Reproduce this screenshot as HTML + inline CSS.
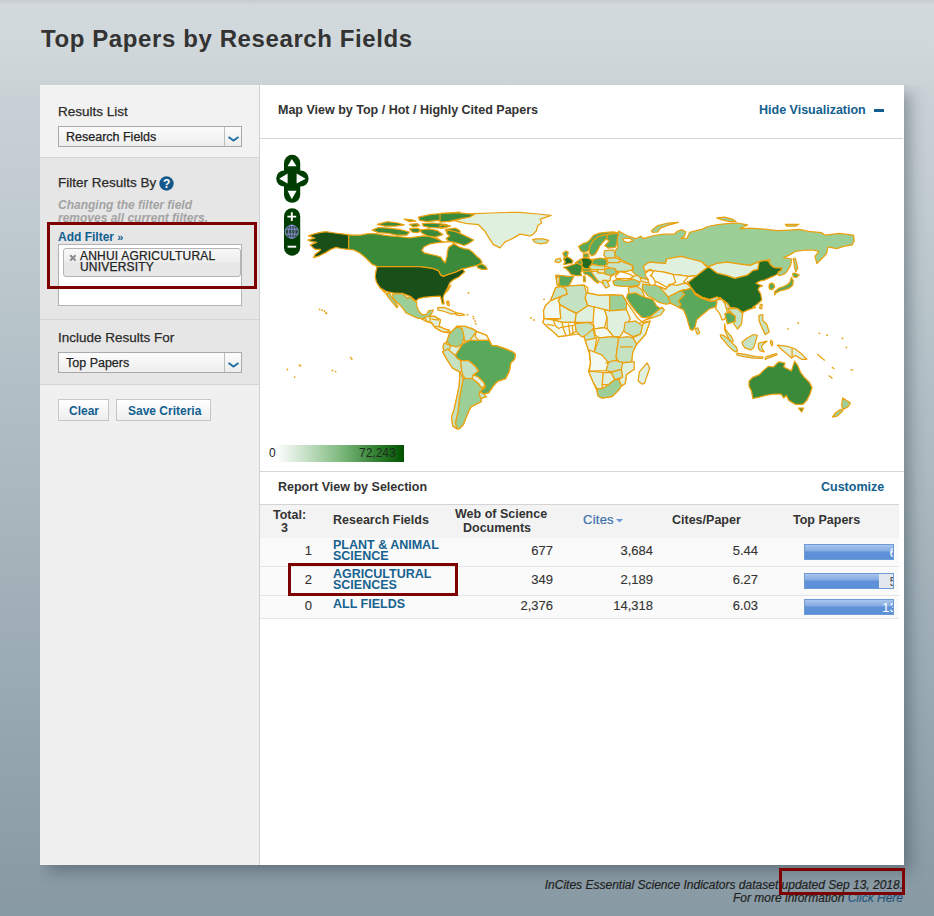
<!DOCTYPE html>
<html><head><meta charset="utf-8">
<style>
*{margin:0;padding:0;box-sizing:border-box}
html,body{width:934px;height:916px;overflow:hidden}
body{font-family:"Liberation Sans",sans-serif;color:#333;position:relative;
background:linear-gradient(to bottom,#c6ccd0 0px,#d2d9dc 5px,#d1d8db 45px,#c9d1d6 100px,#bec9ce 240px,#b7c4ca 320px,#a1b0b8 600px,#8a9ba5 880px,#889aa4 916px);}
.a{position:absolute;white-space:nowrap}
.b{font-weight:bold}
.lnk{color:#12608f !important}
.t13{font-size:13.5px;line-height:16px;color:#2a2a2a;-webkit-text-stroke:0.25px #2a2a2a}
.rg{-webkit-text-stroke:0.25px currentColor}
.t125b{font-size:12.5px;line-height:15px;font-weight:bold;color:#333}
.sel{position:absolute;width:184px;height:21px;border:1px solid #a9a9a9;background:linear-gradient(#fcfcfc,#ededed)}
.sel .arr{position:absolute;right:0;top:0;width:17px;height:19px;border-left:1px solid #bdbdbd}
.btn{position:absolute;top:399px;height:22px;border:1px solid #c6c6c6;background:linear-gradient(#ffffff,#eeeeee)}
.num{position:absolute;-webkit-text-stroke:0.12px #333;font-size:13px;line-height:15px;color:#333;text-align:right;white-space:nowrap}
.fld{position:absolute;left:333px;font-size:12.5px;font-weight:bold;color:#17628f;line-height:11px;white-space:nowrap}
.bar{position:absolute;left:804px;width:90px;height:16px;background:linear-gradient(#a9c5ec 0%,#86ade3 40%,#5f91d8 52%,#5b8fd7 100%);border:1px solid #6d9bd8;overflow:hidden}
.bar span{position:absolute;right:-4px;top:0;color:#fff;font-size:13.5px;line-height:15px}
.rb{position:absolute;border:3px solid #7d0101}
</style></head>
<body>
<div class="a b" style="left:41px;top:25px;font-size:24px;line-height:28px;color:#333;letter-spacing:0.6px">Top Papers by Research Fields</div>
<div class="a" style="left:40px;top:85px;width:864px;height:780px;background:#fff;box-shadow:7px 7px 14px -1px rgba(35,50,60,.38);clip-path:inset(0 -40px -40px 0)"></div>
<div class="a" style="left:40px;top:85px;width:219px;height:780px;background:#f0f0f0"></div>
<div class="a" style="left:259px;top:85px;width:1px;height:780px;background:#d0d0d0"></div>
<div class="a" style="left:40px;top:85px;width:219px;height:72px;background:#f2f2f2"></div>
<div class="a" style="left:40px;top:157px;width:219px;height:1px;background:#d6d6d6"></div>
<div class="a" style="left:40px;top:158px;width:219px;height:161px;background:#e6e6e6"></div>
<div class="a" style="left:40px;top:319px;width:219px;height:1px;background:#d3d3d3"></div>
<div class="a" style="left:40px;top:320px;width:219px;height:64px;background:#e6e6e6"></div>
<div class="a" style="left:40px;top:384px;width:219px;height:1px;background:#d3d3d3"></div>

<div class="a t13" style="left:58px;top:103.5px">Results List</div>
<div class="sel" style="left:58px;top:126px"><div class="arr"><svg width="17" height="19" viewBox="0 0 17 19"><path d="M3.5 10 L8.5 13.5 L13.5 10" fill="none" stroke="#2170a6" stroke-width="2"/></svg></div></div>
<div class="a rg" style="left:66px;top:130px;font-size:12.5px;line-height:15px;color:#222">Research Fields</div>

<div class="a t13" style="left:58px;top:174.5px">Filter Results By</div>
<svg class="a" style="left:159px;top:176px" width="15" height="15" viewBox="0 0 15 15"><circle cx="7.5" cy="7.5" r="7.2" fill="#15598a"/><text x="7.6" y="12" font-family="Liberation Sans" font-weight="bold" font-size="12" fill="#fff" text-anchor="middle">?</text></svg>
<div class="a" style="left:58px;top:198.5px;font-size:12px;font-style:italic;font-weight:bold;color:#a3a3a3;line-height:13px">Changing the filter field<br>removes all current filters.</div>
<div class="a lnk b" style="left:58px;top:230px;font-size:12px;line-height:14px">Add Filter <span style="font-size:11px">»</span></div>
<div class="a" style="left:58px;top:244px;width:184px;height:62px;background:#fff;border:1px solid #b2b2b2"></div>
<div class="a" style="left:63px;top:248px;width:178px;height:29px;border:1px solid #b5b5b5;border-radius:3px;background:linear-gradient(#f8f8f8,#efefef 45%,#e6e6e6 55%,#e8e8e8)"></div>
<svg class="a" style="left:69px;top:253.5px" width="8" height="8" viewBox="0 0 8 8"><path d="M1.2 1.2 L6.6 6.6 M6.6 1.2 L1.2 6.6" stroke="#8a8a8a" stroke-width="2"/></svg>
<div class="a rg" style="left:80px;top:251px;font-size:12px;line-height:10.8px;color:#222;letter-spacing:0.2px">ANHUI AGRICULTURAL<br>UNIVERSITY</div>
<div class="rb" style="left:47px;top:222px;width:210px;height:67px"></div>

<div class="a t13" style="left:58px;top:330px">Include Results For</div>
<div class="sel" style="left:58px;top:352px"><div class="arr"><svg width="17" height="19" viewBox="0 0 17 19"><path d="M3.5 10 L8.5 13.5 L13.5 10" fill="none" stroke="#2170a6" stroke-width="2"/></svg></div></div>
<div class="a rg" style="left:66px;top:355.5px;font-size:12.5px;line-height:15px;color:#222">Top Papers</div>
<div class="btn" style="left:58px;width:51px"></div>
<div class="btn" style="left:116px;width:95px"></div>
<div class="a lnk b" style="left:69px;top:404px;font-size:12px;line-height:14px">Clear</div>
<div class="a lnk b" style="left:128px;top:404px;font-size:12px;line-height:14px">Save Criteria</div>

<div class="a t125b" style="left:278px;top:103px">Map View by Top / Hot / Highly Cited Papers</div>
<div class="a t125b lnk" style="left:759px;top:103px">Hide Visualization</div>
<div class="a" style="left:874px;top:109px;width:10px;height:3px;background:#12608f"></div>
<div class="a" style="left:260px;top:138px;width:643px;height:1px;background:#d6d6d6"></div>
<svg class="a" style="left:0;top:0" width="934" height="916" viewBox="0 0 934 916">
<g stroke="#eba10e" stroke-width="1.25" stroke-linejoin="round">
<polygon fill="#e0f0de" points="446.8,341.7 449.4,334.0 457.1,326.3 464.8,326.3 472.5,328.9 476.4,331.4 486.6,335.3 491.8,345.6 496.5,345.8 504.2,348.4 512.0,351.6 515.2,354.1 514.5,359.3 510.7,363.1 509.4,370.9 505.5,378.6 497.8,381.1 494.0,385.0 488.8,392.7 483.7,394.0 486.3,396.6 481.1,398.5 481.1,401.7 476.0,404.3 470.8,406.9 468.3,412.0 465.7,418.4 463.1,424.9 459.3,428.7 456.7,428.7 452.8,426.1 451.6,417.1 454.1,409.4 456.7,397.9 459.3,385.0 459.9,372.1 452.8,368.3 447.7,360.6 443.9,354.1 442.6,351.6 444.2,352.0 443.0,346.9"/>
<polygon fill="#e0f0de" points="422.4,317.3 425.0,316.6 434.0,316.0 440.4,319.9 439.1,326.3 444.2,328.9 449.4,330.4 450.7,332.7 446.8,332.7 441.7,331.4 435.2,327.6 431.4,323.1 426.3,321.4 421.1,318.6"/>
<polygon fill="#f2f9f1" points="555.7,287.7 562.1,286.4 584.0,285.1 587.8,287.7 587.8,292.9 599.4,295.4 609.7,294.8 622.5,295.4 626.4,301.9 632.8,310.9 637.9,318.6 643.1,322.4 650.0,321.1 645.6,334.0 636.6,344.3 632.8,352.0 631.5,362.3 631.7,362.2 634.2,369.3 626.5,374.4 625.2,383.4 621.4,386.0 618.8,389.9 612.4,396.3 602.1,398.2 598.3,396.3 597.0,391.1 593.1,382.1 588.6,371.2 590.6,362.9 589.3,350.0 590.4,362.3 589.1,352.0 586.5,344.3 585.2,337.9 578.8,334.0 568.5,335.3 558.3,336.6 553.1,331.4 548.0,327.6 542.8,322.4 544.1,318.6 543.5,310.9 545.4,305.7 550.6,300.6"/>
<polygon fill="#e0f0de" points="632.0,276.0 646.0,275.0 650.0,284.0 644.0,290.0 636.0,290.0 630.0,283.0"/>
<polygon fill="#e0f0de" points="455.4,220.9 462.0,215.0 474.3,213.6 490.0,213.0 505.0,212.5 520.0,212.3 537.7,214.0 551.2,215.3 540.3,219.1 541.6,223.0 537.7,225.6 536.4,230.7 532.6,234.6 530.0,235.9 520.0,234.1 512.8,238.4 505.1,241.9 500.0,247.9 493.1,244.4 488.8,237.6 484.5,230.7 478.5,224.7 465.7,223.4"/>
<polygon fill="#c5e3c2" points="532.6,239.7 536.4,238.8 542.8,238.8 548.6,240.4 546.7,242.9 540.3,243.8 535.1,242.5"/>
<polygon fill="#3a8a3a" points="377.3,224.3 387.5,221.7 397.8,223.0 404.2,224.9 395.2,226.2 385.0,226.2"/>
<polygon fill="#3a8a3a" points="372.1,230.1 378.5,227.5 388.8,228.1 399.1,229.4 409.4,232.0 406.8,235.2 396.5,235.2 388.8,233.3 378.5,232.6"/>
<polygon fill="#3a8a3a" points="404.2,219.1 412.0,219.8 415.8,221.1 409.4,221.7"/>
<polygon fill="#3a8a3a" points="409.4,224.3 417.1,223.6 419.7,225.6 413.2,226.9"/>
<polygon fill="#3a8a3a" points="409.4,228.8 417.1,228.1 422.2,230.7 417.1,232.6 412.0,232.0"/>
<polygon fill="#3a8a3a" points="418.4,217.2 429.9,214.6 442.8,213.4 460.0,212.1 460.0,219.1 449.2,221.7 437.6,220.4 427.4,221.7 419.7,220.4"/>
<polygon fill="#3a8a3a" points="422.2,223.6 432.5,223.0 445.4,224.3 450.5,226.2 442.8,228.1 429.9,227.5 423.5,226.2"/>
<polygon fill="#3a8a3a" points="419.7,230.1 428.7,228.8 437.6,230.7 442.8,234.6 435.1,237.1 427.4,235.9 422.2,233.3"/>
<polygon fill="#3a8a3a" points="429.9,237.1 437.6,238.4 442.8,242.3 435.1,243.6"/>
<polygon fill="#3a8a3a" points="445.4,229.4 455.6,228.1 460.0,230.7 460.0,237.1 453.1,238.4 447.9,234.6"/>
<polygon fill="#3a8a3a" points="440.0,213.6 457.1,212.7 474.3,214.4 470.0,217.0 461.4,218.7 448.6,221.3 440.0,222.1"/>
<polygon fill="#3a8a3a" points="440.0,225.6 445.1,224.7 445.1,227.3 440.0,228.1"/>
<polygon fill="#3a8a3a" points="447.3,230.1 455.0,231.4 462.7,234.6 469.1,237.8 473.6,240.0 468.5,243.6 464.0,245.5 458.8,243.6 453.7,242.3 448.5,241.0 446.0,238.4 449.8,235.9 446.6,233.3"/>
<polygon fill="#1b4f19" points="348.6,234.8 342.4,233.9 334.7,233.0 325.7,231.7 319.3,232.6 314.1,233.9 308.4,235.9 312.2,237.1 314.8,238.2 307.7,240.0 311.6,241.6 316.7,242.3 310.3,244.9 312.8,247.4 315.4,249.4 320.6,249.4 319.3,251.3 315.4,253.9 313.5,257.7 319.3,255.8 325.7,252.6 330.8,249.4 336.0,247.4 341.1,248.5 348.6,249.4"/>
<polygon fill="#3a8a3a" points="348.6,234.8 354.0,235.2 360.4,235.2 366.8,233.9 372.0,233.5 377.1,233.9 383.5,235.2 389.9,235.9 397.6,236.5 402.8,237.1 410.0,237.8 416.4,236.9 422.8,235.9 429.3,236.5 433.8,237.8 439.6,240.0 443.4,242.3 448.5,241.6 453.7,243.6 458.8,246.8 464.0,248.7 469.1,249.4 473.0,252.6 476.8,256.4 480.0,259.0 482.0,262.2 480.0,264.1 476.8,265.4 471.7,266.7 466.5,268.0 462.7,268.6 458.8,270.6 455.0,272.5 448.5,274.4 443.4,276.4 440.8,275.1 438.3,270.6 433.1,268.6 425.4,267.4 417.7,266.5 410.0,266.5 377.1,266.5 372.0,264.1 368.1,260.3 364.2,256.4 359.1,252.6 354.0,250.0 348.6,249.4"/>
<polygon fill="#ffffff" points="421.6,250.3 424.1,246.8 429.3,244.2 435.7,242.9 442.1,242.3 448.5,241.6 454.3,242.3 452.4,244.9 448.5,247.4 447.3,252.6 447.0,256.4 445.3,262.9 442.8,260.3 440.8,257.1 435.7,255.5 429.3,254.2 424.1,252.8"/>
<polygon fill="#3a8a3a" points="476.8,265.4 482.0,263.9 485.8,266.5 487.1,269.3 482.0,269.3 478.1,268.0"/>
<polygon fill="#1b4f19" points="377.1,266.5 410.0,266.5 417.7,266.5 425.4,267.4 433.1,268.6 438.3,270.6 440.8,275.1 443.4,276.4 448.5,274.4 455.0,272.5 458.8,270.6 462.7,268.6 464.6,271.9 458.8,277.0 453.7,279.6 449.8,282.8 447.9,287.3 444.0,295.0 450.7,285.1 448.1,290.3 444.2,294.1 443.0,298.0 444.2,303.8 442.3,303.8 440.4,296.1 431.4,296.7 423.7,297.4 418.5,298.6 416.0,301.2 410.8,296.7 403.1,293.5 392.8,292.9 386.4,291.6 380.0,287.7 387.4,295.0 383.5,291.1 379.7,287.3 376.4,282.1 375.2,277.0 375.8,271.9"/>
<polygon fill="#9ccf98" points="392.8,294.0 402.5,293.3 407.6,298.5 409.5,296.6 413.4,300.4 416.6,302.3 416.9,306.2 418.5,310.7 421.8,314.5 426.3,314.5 428.8,310.7 433.3,310.0 431.4,313.9 428.8,317.1 425.0,318.4 418.5,318.4 412.1,315.8 405.7,312.6 403.8,309.4 399.3,304.3 395.4,301.1 392.8,297.2"/>
<polygon fill="#9ccf98" points="387.1,293.3 389.6,293.3 392.2,297.8 395.4,301.7 398.0,306.8 396.7,307.5 393.5,303.6 390.3,299.8 387.1,295.3"/>
<polygon fill="#e0f0de" points="425.0,317.0 434.0,316.3 440.4,319.9 439.1,326.3 444.2,328.9 449.4,330.4 446.8,332.1 441.7,331.4 435.2,327.6 431.4,322.4 426.3,321.1"/>
<polygon fill="#e0f0de" points="437.8,307.6 444.2,307.4 452.0,310.6 457.1,313.2 452.0,314.1 444.2,311.5 437.8,309.8"/>
<polygon fill="#e0f0de" points="455.8,312.8 462.2,313.7 464.8,315.0 459.7,315.7 455.8,314.7"/>
<polygon fill="#e0f0de" points="446.8,301.9 448.7,301.2 449.4,305.7 447.5,305.1"/>
<polygon fill="#9ccf98" points="449.4,334.0 457.1,326.3 462.2,328.9 464.8,334.0 462.2,344.3 457.1,346.9 450.7,345.6 446.8,341.7"/>
<polygon fill="#c5e3c2" points="457.1,326.3 464.8,326.3 472.5,328.9 476.4,331.4 469.9,340.4 464.8,341.7 463.5,334.0 462.2,328.9"/>
<polygon fill="#f2f9f1" points="476.4,331.4 486.6,335.3 489.2,340.4 478.9,340.4 475.1,336.6"/>
<polygon fill="#c5e3c2" points="444.2,343.0 450.7,345.6 449.4,349.4 444.2,352.0 443.0,346.9"/>
<polygon fill="#5aa85a" points="462.2,344.3 469.9,340.4 478.9,340.4 489.2,340.4 491.8,345.6 496.5,345.8 504.2,348.4 512.0,351.6 515.2,354.1 514.5,359.3 510.7,363.1 509.4,370.9 505.5,378.6 497.8,381.1 494.0,385.0 488.8,392.7 483.7,394.0 479.8,391.4 485.0,387.6 483.7,382.4 478.5,377.3 473.4,374.7 478.5,370.9 474.7,365.7 468.3,360.6 460.6,360.6 456.7,358.0 455.4,355.4"/>
<polygon fill="#c5e3c2" points="442.6,351.6 447.7,349.0 455.4,355.4 456.7,358.0 460.6,360.6 461.8,370.9 460.6,372.1 452.8,368.3 447.7,360.6 443.9,354.1"/>
<polygon fill="#c5e3c2" points="460.6,360.6 468.3,360.6 474.7,365.7 478.5,370.9 473.4,374.7 472.1,378.6 465.7,378.6 463.1,376.0 461.8,370.9"/>
<polygon fill="#e0f0de" points="472.1,378.6 473.4,374.7 478.5,377.3 483.7,382.4 485.0,386.3 481.1,387.6 478.5,383.7"/>
<polygon fill="#c5e3c2" points="479.8,391.4 483.7,394.0 486.3,396.6 481.1,398.5 479.2,395.3"/>
<polygon fill="#9ccf98" points="463.1,378.6 472.1,378.6 478.5,383.7 481.1,387.6 485.0,387.6 479.8,391.4 479.2,395.3 481.1,398.5 481.1,401.7 476.0,404.3 470.8,406.9 468.3,412.0 465.7,418.4 463.1,424.9 459.3,428.7 456.7,428.7 455.4,422.3 458.0,412.0 459.3,399.1 461.2,388.9"/>
<polygon fill="#c5e3c2" points="459.9,372.1 463.1,378.6 461.2,388.9 459.3,399.1 458.0,412.0 455.4,422.3 456.7,428.7 452.8,426.1 451.6,417.1 454.1,409.4 456.7,397.9 459.3,385.0"/>
<polygon fill="#c5e3c2" points="555.7,287.7 562.1,286.4 566.0,289.0 567.3,294.1 560.8,296.7 550.6,300.6"/>
<polygon fill="#c5e3c2" points="562.1,286.4 568.5,285.8 584.0,285.1 586.5,292.9 585.2,298.0 587.8,305.7 576.3,313.4 568.5,309.6 559.6,304.4 558.3,300.6 560.8,296.7 567.3,294.1 566.0,289.0"/>
<polygon fill="#e0f0de" points="586.5,292.9 599.4,295.4 609.7,294.8 609.7,310.9 604.5,309.6 594.2,307.0 587.8,305.7 585.2,298.0"/>
<polygon fill="#9ccf98" points="609.7,294.8 622.5,295.4 626.4,301.9 626.4,309.6 609.7,310.9"/>
<polygon fill="#f2f9f1" points="550.6,300.6 560.8,296.7 558.3,300.6 559.6,304.4 560.8,318.6 553.1,318.6 544.1,318.6 543.5,310.9 545.4,305.7"/>
<polygon fill="#e0f0de" points="559.6,304.4 568.5,309.6 576.3,313.4 575.0,322.4 568.5,322.4 562.1,322.4 553.1,319.9 560.8,318.6"/>
<polygon fill="#e0f0de" points="576.3,313.4 587.8,305.7 594.2,307.0 594.2,322.4 589.1,322.4 581.4,322.4 575.0,322.4"/>
<polygon fill="#f2f9f1" points="594.2,307.0 604.5,309.6 607.1,317.3 604.5,327.6 594.2,328.9 593.0,322.4"/>
<polygon fill="#e0f0de" points="609.7,310.9 626.4,309.6 630.2,318.6 625.1,328.9 619.9,336.6 613.5,336.6 607.1,328.9 607.1,317.3 604.5,309.6"/>
<polygon fill="#c5e3c2" points="625.1,322.4 635.4,321.1 643.1,326.3 640.5,334.0 632.8,336.6 623.8,331.4"/>
<polygon fill="#e0f0de" points="643.1,323.7 650.0,321.1 645.6,334.0 636.6,344.3 632.8,337.9 640.5,334.0"/>
<polygon fill="#f2f9f1" points="544.1,318.6 553.1,319.9 562.1,322.4 568.5,322.4 575.0,322.4 576.3,331.4 568.5,335.3 558.3,336.6 553.1,331.4 548.0,327.6 542.8,322.4"/>
<polygon fill="#c5e3c2" points="575.0,323.7 589.1,322.4 594.2,326.3 590.4,335.3 581.4,336.6 576.3,331.4"/>
<polygon fill="#c5e3c2" points="584.0,336.6 593.0,328.9 595.5,339.1 586.5,344.3"/>
<polygon fill="#f2f9f1" points="594.2,328.9 604.5,327.6 607.1,328.9 613.5,336.6 599.4,337.9 595.5,335.3"/>
<polygon fill="#e0f0de" points="585.2,340.4 596.8,337.9 594.2,352.0 589.1,352.0"/>
<polygon fill="#c5e3c2" points="599.4,337.9 613.5,336.6 618.7,337.9 617.4,346.9 616.1,357.1 618.7,364.9 608.4,362.3 596.8,355.9 591.7,352.0 594.2,352.0"/>
<polygon fill="#c5e3c2" points="618.7,337.9 627.6,336.6 632.8,337.9 636.6,344.3 632.8,352.0 631.5,362.3 618.7,362.3 616.1,357.1 617.4,346.9"/>
<polygon fill="#f2f9f1" points="589.3,350.0 602.1,355.1 608.5,362.9 606.0,370.6 589.3,371.2 590.6,362.9"/>
<polygon fill="#e0f0de" points="588.6,371.2 603.4,372.5 602.1,388.6 597.0,388.6 593.1,382.1"/>
<polygon fill="#e0f0de" points="603.4,372.5 611.1,372.5 615.0,379.6 608.5,384.7 602.1,384.7"/>
<polygon fill="#c5e3c2" points="606.0,362.9 615.0,360.3 624.0,362.9 621.4,369.3 611.1,371.9 606.0,370.6 608.5,362.9"/>
<polygon fill="#c5e3c2" points="611.1,372.5 621.4,369.3 622.7,377.0 615.0,379.6"/>
<polygon fill="#e0f0de" points="622.7,362.9 634.2,361.6 634.2,369.3 626.5,374.4 625.2,383.4 621.4,386.0 618.8,379.6 622.7,377.0 621.4,369.3"/>
<polygon fill="#9ccf98" points="597.0,388.6 602.1,388.6 608.5,384.7 615.0,379.6 618.8,379.6 621.4,386.0 618.8,389.9 612.4,396.3 602.1,398.2 598.3,396.3 597.0,391.1"/>
<polygon fill="#e0f0de" points="638.1,380.9 639.4,371.9 647.1,362.9 649.7,368.0 644.5,383.4 642.0,384.1"/>
<polygon fill="#9ccf98" points="618.7,231.0 626.7,235.5 635.7,238.7 640.8,236.2 643.4,238.7 653.7,235.5 664.0,234.2 674.2,234.2 676.8,231.7 682.0,229.7 685.8,231.7 684.5,236.2 680.7,238.7 687.1,238.1 689.7,232.3 697.4,230.4 702.5,229.1 707.6,226.5 717.9,224.6 727.1,223.6 737.4,223.0 747.6,224.9 739.9,228.8 750.2,228.1 760.5,228.8 777.7,230.7 789.3,230.1 799.6,229.4 808.5,231.4 821.4,232.6 825.2,235.2 839.4,233.3 853.5,235.2 854.2,241.0 852.2,244.9 844.5,246.1 836.8,248.7 830.4,247.4 827.8,247.4 826.5,253.9 821.4,259.0 816.9,263.5 815.0,256.4 818.8,251.3 812.4,250.0 806.0,250.0 795.7,251.3 789.3,255.1 783.5,257.7 791.8,259.0 790.6,265.4 786.7,271.9 785.0,273.6 779.8,275.6 777.3,274.3 778.5,271.7 781.1,270.4 781.8,267.9 776.0,267.9 773.4,267.2 770.2,264.6 768.9,261.4 770.0,259.6 759.2,261.6 750.2,265.4 739.9,264.1 727.1,262.2 716.8,263.5 707.8,266.7 701.4,261.6 691.1,259.0 680.8,256.4 666.7,259.0 665.4,263.5 657.7,262.9 650.0,262.2 650.0,280.3 643.7,280.3 641.1,277.7 635.1,274.3 631.7,270.9 633.4,266.6 628.2,264.0 621.4,262.3 619.7,258.0 614.5,255.4 615.4,250.3 618.0,246.9 617.1,240.0"/>
<polygon fill="#9ccf98" points="651.3,230.7 657.7,225.6 668.0,223.0 678.3,222.4 669.3,224.9 660.3,228.1 657.7,232.0 652.6,232.3"/>
<polygon fill="#ffffff" points="622.8,238.7 629.3,238.1 633.1,240.6 628.0,242.6 624.1,241.3"/>
<polygon fill="#9ccf98" points="716.8,217.9 724.5,217.2 732.2,219.1 736.1,221.7 729.7,221.7 722.0,219.8"/>
<polygon fill="#9ccf98" points="785.4,224.3 798.9,224.3 795.7,226.2 786.7,226.2"/>
<polygon fill="#9ccf98" points="793.3,258.9 795.2,258.2 796.5,262.7 797.8,267.9 795.9,271.7 794.6,267.9 794.0,262.7"/>
<polygon fill="#e0f0de" points="575.6,262.7 580.7,259.3 592.7,259.3 606.4,258.4 620.1,259.3 632.1,265.3 632.9,269.6 616.7,273.0 610.7,276.4 609.8,280.7 603.0,283.3 599.5,280.7 595.3,276.4 592.7,273.0 589.3,269.6 582.4,269.6"/>
<polygon fill="#5aa85a" points="578.6,246.4 580.7,250.7 583.3,252.4 586.7,251.6 589.3,249.9 590.1,245.6 593.5,240.4 597.8,237.0 603.0,235.3 608.1,234.4 615.0,233.6 618.4,233.1 613.2,231.9 606.4,232.3 599.5,233.1 593.5,235.3 591.0,238.7 587.5,242.1 582.4,243.9"/>
<polygon fill="#5aa85a" points="590.1,245.6 593.5,240.4 597.8,237.0 603.0,235.3 608.1,234.4 606.4,238.7 603.0,242.1 599.5,246.4 597.8,249.9 595.3,254.1 591.8,255.9 589.3,253.3 589.3,249.9"/>
<polygon fill="#5aa85a" points="608.1,234.4 615.0,233.6 618.4,233.1 617.5,237.9 616.7,244.7 615.0,247.3 608.1,248.1 604.7,245.6 609.0,241.3 606.4,238.7"/>
<polygon fill="#5aa85a" points="583.3,254.1 587.5,253.3 589.3,256.7 585.8,257.6 583.3,256.7"/>
<polygon fill="#5aa85a" points="562.7,253.3 566.1,251.1 568.3,252.4 567.0,256.7 565.3,258.4 563.6,259.3 564.4,256.7"/>
<polygon fill="#236a22" points="565.3,258.4 567.0,256.7 570.4,258.4 573.0,261.0 572.1,263.1 567.0,264.0 563.6,264.4 565.3,261.9 563.6,259.3"/>
<polygon fill="#c5e3c2" points="555.9,259.3 560.1,258.4 561.4,261.0 558.4,262.7 555.0,261.9"/>
<polygon fill="#3a8a3a" points="563.6,267.4 568.7,266.1 573.8,264.4 578.1,262.7 582.4,265.3 582.4,269.6 580.7,273.0 581.6,275.6 576.4,275.6 571.3,274.7 568.7,271.3 566.1,268.7"/>
<polygon fill="#5aa85a" points="555.7,275.1 562.1,275.7 568.5,276.4 573.7,276.4 571.1,282.1 568.5,286.0 562.1,286.0 557.6,285.4 556.3,279.6"/>
<polygon fill="#c5e3c2" points="556.3,277.0 559.6,277.0 558.9,284.7 557.0,284.7"/>
<polygon fill="#5aa85a" points="583.3,271.3 589.3,269.6 592.7,272.1 595.3,276.4 599.5,280.7 597.8,283.3 594.4,280.7 591.0,277.3 587.5,274.7 584.1,273.9"/>
<polygon fill="#5aa85a" points="583.3,276.4 585.0,276.4 585.4,281.6 583.7,281.6"/>
<polygon fill="#5aa85a" points="575.6,262.7 580.7,259.3 582.4,261.9 582.4,265.3 578.1,263.6"/>
<polygon fill="#236a22" points="580.7,259.3 584.1,257.6 589.3,258.4 592.7,261.0 591.8,264.4 589.3,267.0 590.1,268.7 585.0,268.7 581.6,266.1 582.4,262.7"/>
<polygon fill="#5aa85a" points="592.7,261.0 593.5,259.3 600.4,258.0 606.4,259.3 607.2,264.4 604.7,266.1 597.8,265.3 591.8,264.4"/>
<polygon fill="#c5e3c2" points="589.3,267.0 591.8,264.4 597.8,265.3 604.7,266.1 604.7,269.6 597.8,269.6 591.0,269.6"/>
<polygon fill="#5aa85a" points="581.6,268.7 585.0,268.7 590.1,268.7 591.0,269.6 589.3,271.3 583.3,271.3"/>
<polygon fill="#e0f0de" points="597.8,269.6 604.7,269.6 604.7,273.0 597.8,273.0"/>
<polygon fill="#9ccf98" points="604.7,269.6 609.8,267.9 615.0,268.7 616.7,273.0 610.7,275.6 604.7,273.9"/>
<polygon fill="#e0f0de" points="591.0,271.3 597.8,271.3 597.8,273.0 604.7,273.0 604.7,273.9 610.7,275.6 610.7,276.4 609.8,280.7 603.0,283.3 597.8,280.7 594.4,276.4"/>
<polygon fill="#c5e3c2" points="602.5,280.3 606.8,280.3 609.4,286.3 606.0,288.0 603.4,284.6"/>
<polygon fill="#c5e3c2" points="604.7,250.7 613.2,249.9 615.0,253.3 615.0,257.6 606.4,258.4 603.8,255.0"/>
<polygon fill="#c5e3c2" points="606.4,258.4 615.0,257.6 620.1,259.3 619.2,262.7 608.1,262.7 607.2,259.3"/>
<polygon fill="#c5e3c2" points="607.2,264.4 608.1,262.7 619.2,262.7 620.1,261.0 632.1,265.3 632.9,269.6 626.9,271.3 616.7,271.3 615.0,268.7 609.8,267.9 604.7,266.1"/>
<polygon fill="#ffffff" points="615.4,276.0 619.7,271.7 624.8,272.6 630.0,274.3 633.4,276.9 630.0,278.6 621.4,278.6 616.3,278.6"/>
<polygon fill="#9ccf98" points="612.8,281.1 618.0,279.4 624.8,280.3 633.4,279.4 640.2,282.0 638.5,285.4 630.0,286.3 621.4,286.3 614.5,285.4"/>
<polygon fill="#e0f0de" points="640.2,277.7 647.1,279.4 650.0,280.3 647.1,282.9 641.1,281.1"/>
<polygon fill="#e0f0de" points="650.0,262.2 657.7,262.9 665.4,263.5 666.7,259.0 680.8,256.4 691.1,259.0 701.4,261.6 707.2,267.4 701.4,271.9 697.5,275.7 688.5,276.4 679.6,275.1 673.1,274.4 662.8,271.9 657.7,271.9 652.6,270.6 650.0,269.3 645.5,272.0 643.1,266.6 647.0,263.4"/>
<polygon fill="#f2f9f1" points="652.6,270.6 662.8,271.9 673.1,274.4 679.6,275.1 688.5,276.4 697.5,275.7 695.0,282.1 688.5,284.7 678.3,287.3 666.7,287.3 657.7,282.1 650.0,279.6"/>
<polygon fill="#e0f0de" points="708.5,266.7 716.8,263.5 727.1,262.2 739.9,264.1 750.2,265.4 759.2,261.6 757.9,269.3 752.8,270.6 747.6,275.1 734.8,278.3 727.1,275.7 716.8,273.1 711.7,269.3"/>
<polygon fill="#c5e3c2" points="628.2,288.0 636.8,286.3 641.9,289.7 644.5,296.6 638.5,300.0 630.0,300.0 629.1,293.1"/>
<polygon fill="#9ccf98" points="642.6,284.1 647.7,284.8 654.1,284.8 659.3,286.7 665.7,289.3 668.3,297.0 670.8,303.4 665.7,304.1 658.0,302.1 652.8,298.3 647.7,295.7 642.6,289.3"/>
<polygon fill="#e0f0de" points="659.3,286.7 665.7,289.3 669.6,284.1 676.0,285.4 686.3,282.9 691.4,288.0 687.5,289.3 681.1,290.6 670.8,295.7 668.3,297.0"/>
<polygon fill="#9ccf98" points="668.3,297.0 670.8,295.7 681.1,290.6 687.5,289.3 691.4,288.0 685.0,294.4 681.1,298.3 678.5,300.9 681.1,304.7 678.5,307.3 670.8,303.4"/>
<polygon fill="#5aa85a" points="627.6,294.1 635.4,292.9 643.1,296.7 646.4,297.6 652.8,299.6 656.7,306.0 660.6,308.6 655.4,312.4 650.3,316.3 645.1,317.6 641.8,317.3 636.6,312.1 631.5,305.7 626.4,298.0"/>
<polygon fill="#c5e3c2" points="655.4,312.4 661.8,307.3 664.4,309.9 660.6,315.0 652.8,317.6 645.1,320.1 640.0,322.7 650.0,317.3"/>
<polygon fill="#ffffff" points="645.1,273.6 648.9,270.4 653.4,271.1 652.1,274.3 650.2,275.6 653.4,278.1 655.3,282.0 654.7,285.2 650.2,285.2 648.3,282.0 648.3,279.4 645.7,276.2"/>
<polygon fill="#236a22" points="688.5,282.1 695.0,277.0 701.4,271.9 708.5,266.7 711.7,269.3 716.8,273.1 727.1,275.7 734.8,278.3 747.6,275.1 752.8,270.6 757.9,269.3 759.2,261.6 765.6,260.3 768.9,261.4 770.2,264.6 773.4,267.2 776.0,267.9 781.8,267.9 781.1,270.4 778.5,271.7 777.3,274.3 773.4,276.2 768.9,278.1 764.4,280.1 761.2,280.7 758.0,282.0 756.1,283.3 759.3,284.6 762.5,285.9 759.3,287.1 758.0,289.7 760.6,293.6 761.8,300.0 757.7,303.7 752.6,307.6 755.6,307.3 747.9,309.9 742.8,312.4 737.6,308.6 729.9,307.3 727.4,303.4 722.2,299.6 717.1,297.0 709.4,299.6 701.7,297.0 695.2,293.1 691.4,288.0 687.5,281.6"/>
<polygon fill="#5aa85a" points="681.1,290.6 687.5,289.3 691.4,288.0 695.2,294.4 700.4,297.6 709.4,300.9 714.5,300.9 717.1,299.6 719.7,297.6 722.2,299.6 718.4,303.4 714.5,307.3 709.4,308.6 706.8,311.1 700.4,316.3 696.5,320.1 695.2,326.6 692.7,330.4 690.1,329.1 686.3,316.3 683.7,309.9 681.1,308.6 678.5,307.3 681.1,304.7 678.5,300.9 681.1,298.3 685.0,294.4"/>
<polygon fill="#c5e3c2" points="691.4,288.0 695.2,293.1 701.7,297.0 709.4,299.6 717.1,297.0 722.2,299.6 719.7,297.6 717.1,299.6 714.5,300.9 709.4,300.9 700.4,297.6 695.2,294.4"/>
<polygon fill="#c5e3c2" points="722.2,299.6 727.4,303.4 729.9,307.3 737.6,308.6 729.9,311.1 727.4,312.4 724.8,313.7 724.8,303.4"/>
<polygon fill="#c5e3c2" points="695.2,328.5 697.8,327.9 699.7,333.0 697.2,334.3"/>
<polygon fill="#f2f9f1" points="717.1,299.6 722.2,299.6 724.8,303.4 727.4,312.4 724.8,318.9 722.2,320.1 719.7,313.7 715.8,308.6"/>
<polygon fill="#c5e3c2" points="727.4,308.6 737.6,308.6 742.8,313.7 741.5,324.0 737.6,329.1 733.8,324.0 735.1,316.3 729.9,311.1"/>
<polygon fill="#5aa85a" points="724.8,313.7 729.9,312.4 735.1,316.3 735.1,321.4 731.2,322.7 727.4,324.0 726.1,318.9"/>
<polygon fill="#c5e3c2" points="724.6,323.9 725.6,329.6 728.5,333.5 731.4,336.4 733.3,341.2 731.4,342.2 728.5,338.3 726.1,333.5 724.6,329.6"/>
<polygon fill="#c5e3c2" points="720.3,334.9 723.7,335.4 728.5,339.3 732.3,343.1 736.2,347.0 737.6,350.8 735.2,351.8 731.4,348.9 727.5,345.1 723.7,340.2 720.8,337.3"/>
<polygon fill="#c5e3c2" points="742.0,342.2 746.8,338.3 753.5,334.5 757.4,335.4 755.5,342.2 753.5,347.9 750.7,349.9 744.9,347.9 742.9,345.1"/>
<polygon fill="#c5e3c2" points="736.7,353.2 743.9,354.2 750.7,355.7 756.4,356.6 763.2,357.1 762.2,358.5 753.5,358.1 743.9,356.6 737.2,355.2"/>
<polygon fill="#c5e3c2" points="758.4,343.1 767.0,341.2 763.2,344.1 761.3,347.0 764.1,351.8 760.3,350.8 758.4,347.9"/>
<polygon fill="#c5e3c2" points="766.1,356.6 769.9,355.7 772.8,354.7 776.7,353.7 776.7,354.9 772.8,356.3 769.0,357.8 765.1,359.5"/>
<polygon fill="#c5e3c2" points="770.9,340.2 772.8,342.2 771.9,346.0 770.4,343.1"/>
<polygon fill="#5aa85a" points="769.6,283.9 772.1,283.0 774.0,284.6 774.7,287.1 772.1,289.7 769.6,289.1 768.9,286.5"/>
<polygon fill="#5aa85a" points="792.7,273.6 794.6,273.0 799.1,274.9 796.5,277.5 793.3,276.9"/>
<polygon fill="#5aa85a" points="791.4,277.5 793.3,280.7 792.7,285.2 788.8,288.4 785.0,289.7 779.8,291.0 776.0,292.9 774.7,294.9 774.7,291.6 778.5,288.4 783.7,286.5 787.5,284.6 790.1,282.0 790.7,279.4"/>
<polygon fill="#c5e3c2" points="760.3,304.4 762.2,304.4 761.6,308.9 759.6,308.2"/>
<polygon fill="#c5e3c2" points="759.0,315.3 762.8,314.6 762.8,320.4 766.7,324.3 769.3,332.0 765.4,334.6 761.6,326.9 759.0,320.4"/>
<polygon fill="#3a8a3a" points="749.0,381.1 752.8,377.3 759.3,374.7 763.1,370.9 768.3,366.4 773.4,367.0 778.5,361.9 785.0,363.1 783.7,367.0 791.4,370.9 794.6,361.2 797.8,365.7 800.4,372.1 804.2,377.3 809.4,382.4 812.0,387.6 810.0,394.0 806.8,400.4 803.0,404.3 795.2,404.3 788.8,400.4 786.3,395.3 783.7,397.9 781.1,394.0 773.4,394.0 765.7,395.3 759.3,397.2 752.8,398.5 751.6,391.4 749.0,386.3"/>
<polygon fill="#3a8a3a" points="798.5,408.1 803.6,408.1 801.7,412.0"/>
<polygon fill="#9ccf98" points="842.8,397.9 850.5,403.0 847.9,406.9 842.8,409.4 841.5,405.6"/>
<polygon fill="#9ccf98" points="840.2,409.4 842.8,410.7 837.6,415.9 832.5,417.1 835.1,413.3"/>
<polygon fill="#e0f0de" points="777.3,345.1 787.5,346.4 795.2,349.0 801.7,354.1 806.8,359.3 801.7,359.3 795.2,355.4 791.4,358.0 788.8,355.4 782.4,350.3"/>
<polyline fill="none" points="430.1,316.6 430.1,321.1"/>
<polyline fill="none" points="431.4,319.2 439.1,320.1"/>
<polyline fill="none" points="435.2,326.3 440.4,326.9"/>
<polyline fill="none" points="553.1,319.9 555.7,326.3 559.6,328.9"/>
<polyline fill="none" points="562.1,322.4 563.4,328.9 566.0,335.3"/>
<polyline fill="none" points="568.5,323.7 569.8,334.0"/>
<polyline fill="none" points="559.6,327.6 567.3,326.3 575.0,325.0"/>
<polyline fill="none" points="546.7,324.4 554.4,325.6"/>
<polyline fill="none" points="572.4,325.0 573.0,334.6"/>
<polyline fill="none" points="619.9,346.9 632.8,346.9"/>
<polyline fill="none" points="673.1,274.4 675.7,282.1 666.7,287.3"/>
<polyline fill="none" points="688.5,276.4 683.4,282.1 688.5,284.7"/>
<polyline fill="none" points="792.1,347.9 792.1,357.6"/>
<polyline fill="none" points="817.1,354.1 824.8,360.6"/>
<polyline fill="none" points="828.7,375.4 832.5,378.6"/>
<polyline fill="none" points="850.5,369.6 853.1,370.2"/>
<polyline fill="none" points="831.9,367.0 834.4,368.9"/>
<circle cx="473.2" cy="316.6" r="0.9" fill="#eba10e" stroke="none"/>
<circle cx="473.8" cy="318.6" r="0.9" fill="#eba10e" stroke="none"/>
<circle cx="475.1" cy="321.1" r="0.9" fill="#eba10e" stroke="none"/>
<circle cx="475.7" cy="323.7" r="0.9" fill="#eba10e" stroke="none"/>
<circle cx="467.4" cy="314.7" r="0.9" fill="#eba10e" stroke="none"/>
<circle cx="447" cy="301.5" r="0.9" fill="#eba10e" stroke="none"/>
<circle cx="448" cy="303" r="0.9" fill="#eba10e" stroke="none"/>
<circle cx="319.6" cy="309.3" r="0.9" fill="#eba10e" stroke="none"/>
<circle cx="322" cy="310.2" r="0.9" fill="#eba10e" stroke="none"/>
<circle cx="324.5" cy="311" r="0.9" fill="#eba10e" stroke="none"/>
<circle cx="325.9" cy="312.9" r="0.9" fill="#eba10e" stroke="none"/>
<circle cx="326.5" cy="313.3" r="0.9" fill="#eba10e" stroke="none"/>
<circle cx="350.7" cy="357.7" r="0.9" fill="#eba10e" stroke="none"/>
<circle cx="351.8" cy="359.1" r="0.9" fill="#eba10e" stroke="none"/>
<circle cx="299.4" cy="365.1" r="0.9" fill="#eba10e" stroke="none"/>
<circle cx="300.5" cy="365.9" r="0.9" fill="#eba10e" stroke="none"/>
<circle cx="287.4" cy="369.5" r="0.9" fill="#eba10e" stroke="none"/>
<circle cx="294.7" cy="377.1" r="0.9" fill="#eba10e" stroke="none"/>
<circle cx="332.4" cy="370.5" r="0.9" fill="#eba10e" stroke="none"/>
<circle cx="335.6" cy="371.6" r="0.9" fill="#eba10e" stroke="none"/>
<circle cx="798.2" cy="323" r="0.9" fill="#eba10e" stroke="none"/>
<circle cx="787.9" cy="328.8" r="0.9" fill="#eba10e" stroke="none"/>
<circle cx="819.4" cy="333.3" r="0.9" fill="#eba10e" stroke="none"/>
<circle cx="827.1" cy="335.2" r="0.9" fill="#eba10e" stroke="none"/>
<circle cx="842.5" cy="338.4" r="0.9" fill="#eba10e" stroke="none"/>
<circle cx="846.4" cy="347.4" r="0.9" fill="#eba10e" stroke="none"/>
<circle cx="468.5" cy="292.9" r="0.9" fill="#eba10e" stroke="none"/>
<circle cx="544" cy="299.3" r="0.9" fill="#eba10e" stroke="none"/>
<circle cx="531" cy="318" r="0.9" fill="#eba10e" stroke="none"/>
<circle cx="534" cy="320" r="0.9" fill="#eba10e" stroke="none"/>
</g></svg>
<svg class="a" style="left:272px;top:150px" width="42" height="110" viewBox="0 0 42 110">
<g fill="#003d00">
<rect x="12" y="4.8" width="16.2" height="48" rx="8.1"/>
<rect x="4.2" y="20.4" width="32.4" height="16.2" rx="8.1"/>
<rect x="12" y="58.2" width="16.2" height="47.5" rx="8.1"/>
</g>
<g fill="#fff">
<path d="M19.8 9 L24.6 16.2 L15.6 16.2Z"/>
<path d="M7.2 28.8 L15.6 23.4 L15.6 33.6Z"/>
<path d="M33.6 28.8 L24.6 23.4 L24.6 33.6Z"/>
<path d="M19.8 49.2 L24.6 40.8 L15.6 40.8Z"/>
</g>
<path d="M15.4 66.6 H24.2 M19.8 62.2 V71" stroke="#fff" stroke-width="1.9"/>
<path d="M15.6 96.7 H24.2" stroke="#fff" stroke-width="1.9"/>
<g fill="none" stroke="#9a9af0" stroke-width="0.8">
<circle cx="19.8" cy="81.7" r="6.6" fill="#2a4a3a"/>
<ellipse cx="19.8" cy="81.7" rx="3.2" ry="6.6"/>
<path d="M13.4 79.2 H26.2 M13.4 84.2 H26.2 M19.8 75.1 V88.3"/>
</g>
</svg>
<div class="a" style="left:276px;top:445px;width:128px;height:17px;background:linear-gradient(to right,#ffffff 0%,#cfe5cf 20%,#7fba7f 50%,#2e7d2e 80%,#005200 100%)"></div>
<div class="a" style="left:269px;top:446px;font-size:12px;color:#222;line-height:14px">0</div>
<div class="a" style="left:359px;top:446px;font-size:12px;color:#1d2d1d;line-height:14px">72,243</div>
<div class="a" style="left:260px;top:471px;width:644px;height:1px;background:#d6d6d6"></div>

<div class="a t125b" style="left:278px;top:480px">Report View by Selection</div>
<div class="a t125b lnk" style="left:821px;top:480px">Customize</div>

<div class="a" style="left:260px;top:504px;width:639px;height:1px;background:#d4d4d4"></div>
<div class="a" style="left:260px;top:505px;width:639px;height:33px;background:#f3f3f3"></div>
<div class="a" style="left:260px;top:538px;width:639px;height:80px;background:#fafafa"></div>
<div class="a" style="left:260px;top:566px;width:639px;height:1px;background:#e6e6e6"></div>
<div class="a" style="left:260px;top:595px;width:639px;height:1px;background:#e6e6e6"></div>
<div class="a" style="left:260px;top:618px;width:639px;height:1px;background:#e6e6e6"></div>

<div class="a t125b" style="left:273px;top:508.5px;line-height:13px">Total:<br><span style="padding-left:8px">3</span></div>
<div class="a t125b" style="left:333px;top:513px">Research Fields</div>
<div class="a t125b" style="left:455px;top:508px;line-height:13.7px">Web of Science<br><span style="padding-left:8px">Documents</span></div>
<div class="a" style="left:583px;top:512.3px;font-size:13px;line-height:15px;color:#3d70ab;-webkit-text-stroke:0.2px #3d70ab;letter-spacing:0.25px">Cites</div>
<svg class="a" style="left:616px;top:519px" width="8" height="5"><path d="M0 0 L7 0 L3.5 3.5Z" fill="#6a98d8"/></svg>
<div class="a t125b" style="left:672px;top:513px">Cites/Paper</div>
<div class="a t125b" style="left:793px;top:513px">Top Papers</div>

<div class="num" style="left:282px;top:543px;width:30px">1</div>
<div class="fld" style="top:540px">PLANT &amp; ANIMAL<br>SCIENCE</div>
<div class="num" style="left:493px;top:543px;width:60px">677</div>
<div class="num" style="left:593px;top:543px;width:60px">3,684</div>
<div class="num" style="left:698px;top:543px;width:60px">5.44</div>
<div class="bar" style="top:544px"><span>6</span></div>

<div class="num" style="left:282px;top:572px;width:30px">2</div>
<div class="fld" style="top:569px">AGRICULTURAL<br>SCIENCES</div>
<div class="num" style="left:493px;top:572px;width:60px">349</div>
<div class="num" style="left:593px;top:572px;width:60px">2,189</div>
<div class="num" style="left:698px;top:572px;width:60px">6.27</div>
<div class="bar" style="top:573px;background:#e3e8ee"><div style="position:absolute;left:0;top:0;width:74px;height:14px;background:linear-gradient(#a9c5ec 0%,#86ade3 40%,#5f91d8 52%,#5b8fd7 100%)"></div><span style="color:#555">5</span></div>

<div class="num" style="left:282px;top:598px;width:30px">0</div>
<div class="fld" style="top:599px">ALL FIELDS</div>
<div class="num" style="left:493px;top:598px;width:60px">2,376</div>
<div class="num" style="left:593px;top:598px;width:60px">14,318</div>
<div class="num" style="left:698px;top:598px;width:60px">6.03</div>
<div class="bar" style="top:599px"><span>13</span></div>

<div class="rb" style="left:288px;top:563px;width:170px;height:33px"></div>

<div class="a" style="left:503px;top:878.5px;width:400px;text-align:right;font-size:12px;font-style:italic;color:#1e1e1e;line-height:13.6px;-webkit-text-stroke:0.2px #222">InCites Essential Science Indicators dataset updated Sep 13, 2018.<br>For more information <span style="color:#2a6ea6">Click Here</span></div>
<div class="rb" style="left:779px;top:868px;width:126px;height:27px"></div>
</body></html>
